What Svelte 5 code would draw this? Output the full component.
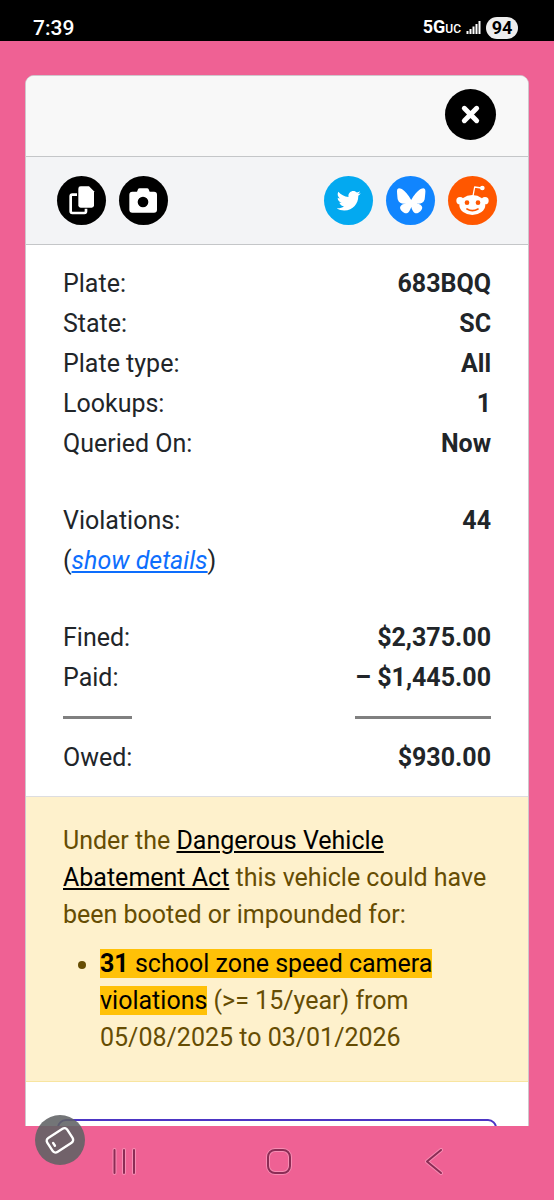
<script>
    let time = "7:39";
    let battery = 94;
    let vehicle = [
        { label: "Plate:", value: "683BQQ" },
        { label: "State:", value: "SC" },
        { label: "Plate type:", value: "All" },
        { label: "Lookups:", value: "1" },
        { label: "Queried On:", value: "Now" },
    ];
    let fined = "$2,375.00";
    let paid = "$1,445.00";
    let owed = "$930.00";
</script>

<svelte:head>
    <title>Plate lookup</title>
</svelte:head>

<div class="screen">
    <header class="status">
        <span class="time">{time}</span>
        <div class="status-right">
            <span class="network">5G<small>UC</small></span>
            <svg class="signal" viewBox="0 0 15 15">
                <path d="M1.5 11v3M4.5 9v5M7.5 6.5V14M10.500 4v10M13.500 1v13" />
            </svg>
            <span class="battery">{battery}</span>
        </div>
    </header>

    <main>
        <div class="card">
            <div class="card-top">
                <button class="round close" aria-label="Close">
                    <svg viewBox="0 0 153 153">
                        <path class="cross" d="M58 58L95 95M95 58L58 95" />
                    </svg>
                </button>
            </div>

            <div class="toolbar">
                <div class="group">
                    <button class="round" aria-label="Copy">
                        <svg viewBox="0 0 147 147">
                            <path class="sheet" d="M60 56H46q-5 0-5 5v45q0 5 5 5h36q5 0 5-5v-8" />
                            <path d="M71 31h25l15 15v42q0 7-7 7H71q-7 0-7-7V38q0-7 7-7z" />
                        </svg>
                    </button>
                    <button class="round" aria-label="Save picture">
                        <svg viewBox="0 0 147 147">
                            <path
                                fill-rule="evenodd"
                                d="M40 47h14l3-7q1-3 5-3h22q4 0 5 3l3 7h13q9 0 9 9v45q0 9-9 9H40q-9 0-9-9V56q0-9 9-9zM72 62a16 16 0 1 0 0 32a16 16 0 1 0 0-32z"
                            />
                        </svg>
                    </button>
                </div>
                <div class="group">
                    <button class="round twitter" aria-label="Share on Twitter">
                        <svg viewBox="0 0 147 147">
                            <path
                                transform="translate(38 38) scale(0.141)"
                                d="M459.37 151.716c.325 4.548.325 9.097.325 13.645 0 138.72-105.583 298.558-298.558 298.558-59.452 0-114.68-17.219-161.137-47.106 8.447.974 16.568 1.299 25.34 1.299 49.055 0 94.213-16.568 130.274-44.832-46.132-.975-84.792-31.188-98.112-72.772 6.498.974 12.995 1.624 19.818 1.624 9.421 0 18.843-1.300 27.614-3.573-48.081-9.747-84.143-51.980-84.143-102.985v-1.299c13.969 7.797 30.214 12.670 47.431 13.319-28.264-18.843-46.781-51.005-46.781-87.391 0-19.492 5.197-37.360 14.294-52.954 51.655 63.675 129.300 105.258 216.365 109.807-1.624-7.797-2.599-15.918-2.599-24.040 0-57.828 46.782-104.934 104.934-104.934 30.213 0 57.502 12.670 76.670 33.137 23.715-4.548 46.456-13.320 66.599-25.340-7.798 24.366-24.366 44.833-46.132 57.827 21.117-2.273 41.584-8.122 60.426-16.243-14.292 20.791-32.161 39.308-52.628 54.253z"
                            />
                        </svg>
                    </button>
                    <button class="round bluesky" aria-label="Share on Bluesky">
                        <svg viewBox="0 0 147 147">
                            <path
                                transform="translate(33 37) scale(0.15)"
                                d="M123.121 33.664C188.241 82.553 258.281 181.68 284 234.873c25.719-53.192 95.759-152.32 160.879-201.21C491.866-1.611 568-28.906 568 57.947c0 17.346-9.945 145.713-15.778 166.555-20.275 72.453-94.155 90.933-159.875 79.748C507.222 323.8 536.444 388.56 473.333 453.32c-119.86 122.992-172.272-30.859-185.702-70.281-2.462-7.227-3.614-10.608-3.631-7.733-.017-2.875-1.169.506-3.631 7.733-13.43 39.422-65.842 193.273-185.702 70.281-63.111-64.76-33.89-129.52 80.986-149.071-65.72 11.185-139.6-7.295-159.875-79.748C9.945 203.659 0 75.291 0 57.946 0-28.906 76.135-1.612 123.121 33.664Z"
                            />
                        </svg>
                    </button>
                    <button class="round reddit" aria-label="Share on Reddit">
                        <svg viewBox="0 0 147 147">
                            <circle cx="36" cy="74" r="11" />
                            <circle cx="111" cy="74" r="11" />
                            <ellipse cx="73" cy="87" rx="39" ry="30" />
                            <circle cx="103" cy="36" r="7" />
                            <path class="antenna" d="M75 60l5-27 20 3" />
                            <circle class="eye" cx="57" cy="80" r="7" />
                            <circle class="eye" cx="90" cy="80" r="7" />
                            <path class="mouth" d="M57 99q16 10 33 0" />
                        </svg>
                    </button>
                </div>
            </div>

            <div class="details">
                <div class="section">
                    {#each vehicle as row (row.label)}
                        <div class="row">
                            <span>{row.label}</span>
                            <strong>{row.value}</strong>
                        </div>
                    {/each}
                </div>
                <div class="section">
                    <div class="row">
                        <span>Violations:</span>
                        <strong>44</strong>
                    </div>
                    <div class="row">
                        <span>(<a class="show" href="#details">show details</a>)</span>
                    </div>
                </div>
                <div class="totals">
                    <span>Fined:</span>
                    <strong>{fined}</strong>
                    <span>Paid:</span>
                    <strong>– {paid}</strong>
                    <hr />
                    <hr />
                    <span>Owed:</span>
                    <strong>{owed}</strong>
                </div>
            </div>

            <div class="warning">
                <p>
                    Under the <a href="#dvaa">Dangerous Vehicle Abatement Act</a> this vehicle
                    could have been booted or impounded for:
                </p>
                <ul>
                    <li>
                        <mark><b>31</b> school zone speed camera violations</mark> (>= 15/year)
                        from 05/08/2025 to 03/01/2026
                    </li>
                </ul>
            </div>

            <div class="more">
                <button class="outline" aria-label="More"></button>
            </div>
        </div>
    </main>

    <nav>
        <button class="float" aria-label="Rotate screen">
            <svg viewBox="0 0 147 147">
                <g transform="rotate(-33 73 74)">
                    <rect x="38" y="50" width="70" height="49" rx="10" />
                    <path d="M52 70v10" />
                </g>
            </svg>
        </button>
        <button class="key" aria-label="Recent apps">
            <svg viewBox="0 0 28 28">
                <path class="glow" d="M4.500 2v23M14 2v23M24 2v23" />
                <path d="M4.500 2v23M14 2v23M24 2v23" />
            </svg>
        </button>
        <button class="key" aria-label="Home">
            <svg viewBox="0 0 28 28">
                <rect class="glow" x="3" y="2" width="22" height="23" rx="7" />
                <rect x="3" y="2" width="22" height="23" rx="7" />
            </svg>
        </button>
        <button class="key" aria-label="Back">
            <svg viewBox="0 0 28 28">
                <path class="glow" d="M21 2L7 13.500L21 25" />
                <path d="M21 2L7 13.500L21 25" />
            </svg>
        </button>
    </nav>
</div>

<style>
    :global(body) {
        background: #ef6194;
    }
    .screen {
        display: flex;
        flex-direction: column;
        height: 100vh;
        color: #212529;
        font-family: Roboto, "Liberation Sans", sans-serif;
        font-size: 25px;
        line-height: 37px;
    }
    button {
        padding: 0;
        border: none;
        background: none;
        cursor: pointer;
    }
    svg {
        display: block;
        width: 100%;
        height: 100%;
    }

    /* phone status bar */
    .status {
        display: flex;
        flex: none;
        align-items: center;
        justify-content: space-between;
        box-sizing: border-box;
        height: 41px;
        padding: 14px 36px 0 33px;
        background: #000;
        color: #fff;
        line-height: 24px;
    }
    .time {
        font-size: 21px;
        font-weight: 500;
    }
    .status-right {
        display: flex;
        align-items: center;
        gap: 5px;
    }
    .network {
        font-size: 18px;
        font-weight: 700;
    }
    .network small {
        font-size: 12px;
        font-weight: 500;
    }
    .signal {
        width: 15px;
        height: 15px;
        fill: none;
        stroke: #fff;
        stroke-width: 2;
    }
    .battery {
        width: 32px;
        border-radius: 11px;
        background: #eee;
        color: #000;
        font-size: 18px;
        font-weight: 700;
        line-height: 22px;
        text-align: center;
    }

    /* card */
    main {
        flex: 1;
        min-height: 0;
        overflow: hidden;
        padding: 34px 25px 0;
    }
    .card {
        overflow: hidden;
        border: 1px solid #cfc6cc;
        border-radius: 9px;
        background: #fff;
    }
    .card-top {
        display: flex;
        justify-content: flex-end;
        padding: 13px 32px 16px;
        border-bottom: 1px solid #c4c6c8;
        background: #f8f8f8;
    }
    .toolbar {
        display: flex;
        justify-content: space-between;
        padding: 19px 31px;
        border-bottom: 1px solid #c4c6c8;
        background: #f3f4f6;
    }
    .group {
        display: flex;
        gap: 13px;
    }
    .round {
        width: 49px;
        height: 49px;
        border-radius: 50%;
        background: #000;
        fill: #fff;
    }
    .close {
        width: 51px;
        height: 51px;
    }
    .twitter {
        background: #03a9f0;
    }
    .bluesky {
        background: #1185fe;
    }
    .reddit {
        background: #ff5700;
    }
    .cross,
    .sheet,
    .antenna,
    .mouth {
        fill: none;
        stroke: #fff;
        stroke-linecap: round;
    }
    .cross {
        stroke-width: 15;
    }
    .sheet {
        stroke-width: 8;
        stroke-linecap: butt;
    }
    .antenna {
        stroke-width: 4;
        stroke-linejoin: round;
    }
    .mouth {
        stroke: #ff5700;
        stroke-width: 5;
    }
    .eye {
        fill: #ff5700;
    }

    .details {
        display: flex;
        flex-direction: column;
        gap: 37px;
        padding: 19px 37px 18px;
        line-height: 40px;
    }
    .row {
        display: flex;
        justify-content: space-between;
    }
    .totals {
        display: grid;
        grid-template-columns: auto auto;
        justify-content: space-between;
    }
    .totals strong {
        text-align: right;
    }
    strong,
    b {
        font-weight: 700;
    }
    hr {
        width: 100%;
        height: 3px;
        margin: 18px 0 19px;
        border: none;
        background: #808080;
    }
    .show {
        color: #0d6efd;
        font-style: italic;
    }

    .warning {
        padding: 25px 37px;
        border-top: 1px solid #dddde0;
        border-bottom: 1px solid #f8e5a0;
        background: #fef1cc;
        color: #664d03;
    }
    .warning a {
        color: #000;
    }
    p {
        margin: 0 0 12px;
    }
    ul {
        margin: 0;
        padding-left: 37px;
    }
    mark {
        background: #ffc107;
        color: #000;
    }

    .more {
        padding: 37px 31px;
    }
    .outline {
        display: block;
        width: 100%;
        height: 58px;
        border: 2px solid #4c35c4;
        border-radius: 9px;
        background: #fff;
    }

    /* phone navigation keys */
    nav {
        position: relative;
        display: flex;
        flex: none;
        justify-content: space-around;
        box-sizing: border-box;
        height: 74px;
        padding: 22px 42px 24px 46px;
    }
    .key {
        width: 28px;
        height: 28px;
        fill: none;
        stroke: #8b2c55;
        stroke-width: 2;
        stroke-linecap: round;
        stroke-linejoin: round;
    }
    .glow {
        stroke: #f68db3;
        stroke-width: 4;
    }
    .float {
        position: absolute;
        top: -11px;
        left: 35px;
        width: 50px;
        height: 50px;
        border-radius: 50%;
        background: rgba(96, 98, 100, 0.88);
        fill: none;
        stroke: #fff;
        stroke-width: 7;
        stroke-linecap: round;
    }
</style>
